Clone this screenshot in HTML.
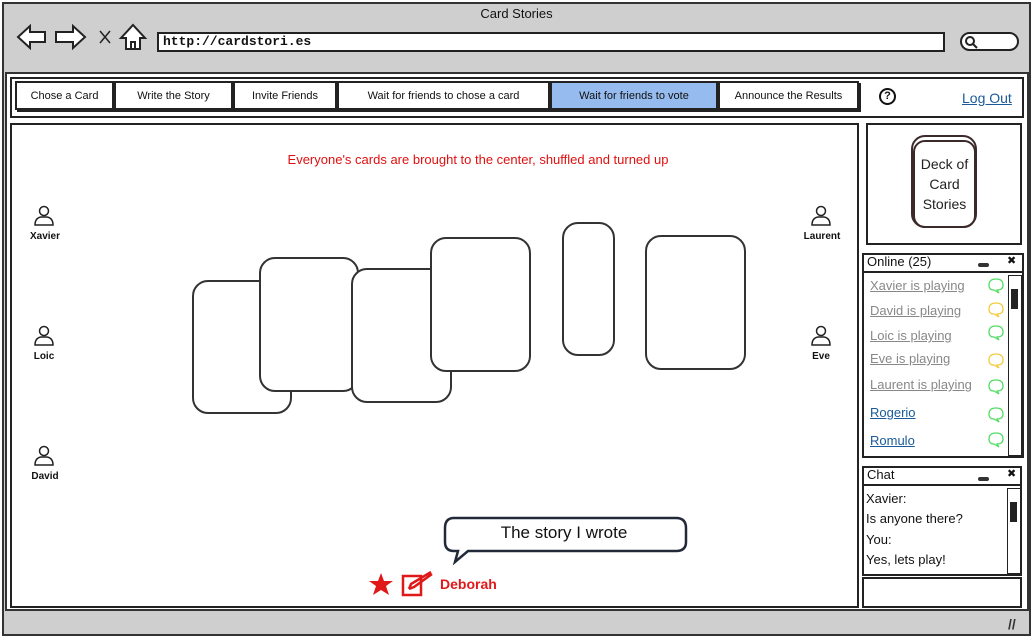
<!DOCTYPE html>
<html><head><meta charset="utf-8"><style>
*{margin:0;padding:0;box-sizing:border-box}
body{width:1033px;height:640px;position:relative;background:#fff;font-family:"Liberation Sans","DejaVu Sans",sans-serif;overflow:hidden;color:#111}
.a{position:absolute}
.box{position:absolute;border:2px solid #222;background:#fff}
.tab{position:absolute;top:81px;height:29px;border:2px solid #222;background:#fff;font-size:11px;text-align:center;line-height:27px;box-shadow:2px 2px 0 #222}
.card{position:absolute;border:2px solid #333;border-radius:16px;background:#fff}
.u{position:absolute;font-size:10px;font-weight:bold;text-align:center;width:50px}
.ol{position:absolute;left:870px;font-size:13px;color:#888;text-decoration:underline}
.bub{position:absolute;left:988px}
.ch{position:absolute;left:866px;font-size:13px}
</style></head><body>
<div class="a" style="left:2px;top:2px;width:1029px;height:634px;border:2px solid #333;background:#cfcfcf"></div>
<div class="a" style="left:0;top:6px;width:1033px;text-align:center;font-size:13px">Card Stories</div>
<svg class="a" style="left:14px;top:22px" width="140" height="32" viewBox="0 0 140 32" fill="none" stroke="#222" stroke-width="2">
<path d="M4 15 L16 4 L16 10 L31 10 L31 20 L16 20 L16 26 Z" fill="#fff"/>
<path d="M71 15 L59 4 L59 10 L42 10 L42 20 L59 20 L59 26 Z" fill="#fff"/>
<path d="M86 9 L96 21 M96 9 L86 21" stroke-width="1.5"/>
<path d="M107 16 L119 3 L131 16 L126 16 L126 27 L112 27 L112 16 Z" fill="#fff"/>
<path d="M117 27 L117 20 L121 20 L121 27"/>
</svg>
<div class="box" style="left:157px;top:32px;width:788px;height:20px;font-size:13px;line-height:16px;padding-left:4px;font-family:'Liberation Mono',monospace;font-weight:bold">http://cardstori.es</div>
<div class="a" style="left:960px;top:32px;width:59px;height:19px;border:2px solid #222;border-radius:10px;background:#fff"></div>
<svg class="a" style="left:964px;top:35px" width="14" height="14"><circle cx="6" cy="6" r="4" fill="none" stroke="#222" stroke-width="2"/><path d="M9 9 L13 13" stroke="#222" stroke-width="2"/></svg>
<div class="a" style="left:5px;top:72px;width:1024px;height:539px;background:#fff;border:2px solid #333"></div>
<div class="box" style="left:10px;top:77px;width:1014px;height:41px"></div>
<div class="tab" style="left:15px;width:99px">Chose a Card</div>
<div class="tab" style="left:114px;width:119px">Write the Story</div>
<div class="tab" style="left:233px;width:104px">Invite Friends</div>
<div class="tab" style="left:337px;width:213px">Wait for friends to chose a card</div>
<div class="tab" style="left:550px;width:168px;background:#96bbee">Wait for friends to vote</div>
<div class="tab" style="left:718px;width:141px">Announce the Results</div>
<div class="a" style="left:879px;top:88px;width:17px;height:17px;border:2px solid #111;border-radius:50%;font-size:11px;font-weight:bold;text-align:center;line-height:13px">?</div>
<div class="a" style="left:962px;top:90px;font-size:14px;color:#1a5a9a;text-decoration:underline">Log Out</div>
<div class="box" style="left:10px;top:123px;width:849px;height:485px"></div>
<div class="a" style="left:10px;top:152px;width:936px;text-align:center;font-size:13px;color:#e01010">Everyone's cards are brought to the center, shuffled and turned up</div>
<div class="card" style="left:192px;top:280px;width:100px;height:134px"></div>
<div class="card" style="left:259px;top:257px;width:100px;height:135px"></div>
<div class="card" style="left:351px;top:268px;width:101px;height:135px"></div>
<div class="card" style="left:430px;top:237px;width:101px;height:135px"></div>
<div class="card" style="left:562px;top:222px;width:53px;height:134px"></div>
<div class="card" style="left:645px;top:235px;width:101px;height:135px"></div>
<svg width="0" height="0"><defs><g id="p"><circle cx="11" cy="6" r="4.5" fill="#fff" stroke="#222" stroke-width="1.5"/><path d="M2 20 Q2 13 8 12 L14 12 Q20 13 20 20 Z" fill="#fff" stroke="#222" stroke-width="1.5"/></g></defs></svg>
<svg class="a" style="left:33px;top:205px" width="22" height="22"><use href="#p"/></svg><div class="u" style="left:20px;top:231px">Xavier</div>
<svg class="a" style="left:33px;top:325px" width="22" height="22"><use href="#p"/></svg><div class="u" style="left:19px;top:351px">Loic</div>
<svg class="a" style="left:33px;top:445px" width="22" height="22"><use href="#p"/></svg><div class="u" style="left:20px;top:471px">David</div>
<svg class="a" style="left:810px;top:205px" width="22" height="22"><use href="#p"/></svg><div class="u" style="left:797px;top:231px">Laurent</div>
<svg class="a" style="left:810px;top:325px" width="22" height="22"><use href="#p"/></svg><div class="u" style="left:796px;top:351px">Eve</div>
<svg class="a" style="left:440px;top:514px" width="252" height="52"><path d="M14 4 L236 4 Q246 4 246 14 L246 28 Q246 37 236 37 L28 37 L15 48 L18 37 L14 37 Q5 37 5 28 L5 14 Q5 4 14 4 Z" fill="#fff" stroke="#222a3a" stroke-width="2.5"/></svg>
<div class="a" style="left:444px;top:523px;width:240px;text-align:center;font-size:17px">The story I wrote</div>
<svg class="a" style="left:368px;top:571px" width="70" height="28"><path d="M13 2 L16 10 L25 10 L18 15 L21 24 L13 19 L5 24 L8 15 L1 10 L10 10 Z" fill="#e01818"/><rect x="35" y="5" width="18" height="19" fill="none" stroke="#e01818" stroke-width="2.5"/><path d="M41 18 L43 13 L63 1 M41 18 L46 16 L64 3" stroke="#e01818" stroke-width="2.5" fill="none"/></svg>
<div class="a" style="left:440px;top:576px;font-size:14px;font-weight:bold;color:#e01818">Deborah</div>
<div class="box" style="left:866px;top:123px;width:156px;height:122px"></div>
<div class="a" style="left:911px;top:135px;width:66px;height:93px;border:2px solid #3a2a2a;border-radius:14px"></div>
<div class="a" style="left:913px;top:140px;width:63px;height:88px;border:2px solid #3a2a2a;border-radius:12px;font-size:14px;text-align:center;line-height:20px;padding-top:12px;color:#222">Deck of<br>Card<br>Stories</div>
<div class="box" style="left:862px;top:253px;width:162px;height:205px"></div>
<div class="a" style="left:862px;top:253px;width:162px;height:20px;border-bottom:2px solid #222;font-size:13px;padding-left:5px;line-height:18px">Online (25)</div>
<div class="a" style="left:978px;top:263px;width:11px;height:4px;background:#333;border-radius:2px"></div>
<div class="a" style="left:1007px;top:254px;font-size:11px;font-weight:bold">✖</div>
<div class="a" style="left:1008px;top:275px;width:14px;height:181px;border:1.5px solid #222;background:#fff"></div>
<div class="a" style="left:1011px;top:289px;width:7px;height:20px;background:#222"></div>
<div class="ol" style="top:278px">Xavier is playing</div>
<div class="ol" style="top:303px">David is playing</div>
<div class="ol" style="top:328px">Loic is playing</div>
<div class="ol" style="top:351px">Eve is playing</div>
<div class="ol" style="top:377px">Laurent is playing</div>
<div class="ol" style="top:405px;color:#1a5a9a">Rogerio</div>
<div class="ol" style="top:433px;color:#1a5a9a">Romulo</div>
<svg width="0" height="0"><defs><path id="b" d="M8 1 Q15 1 15 7 Q15 12 9 12 L11 15 L6 12 Q1 12 1 7 Q1 1 8 1 Z" fill="none" stroke-width="1.3"/></defs></svg>
<svg class="bub" style="top:278px" width="17" height="17"><use href="#b" stroke="#55dd66"/></svg>
<svg class="bub" style="top:302px" width="17" height="17"><use href="#b" stroke="#f2cc40"/></svg>
<svg class="bub" style="top:325px" width="17" height="17"><use href="#b" stroke="#55dd66"/></svg>
<svg class="bub" style="top:353px" width="17" height="17"><use href="#b" stroke="#f2cc40"/></svg>
<svg class="bub" style="top:379px" width="17" height="17"><use href="#b" stroke="#55dd66"/></svg>
<svg class="bub" style="top:407px" width="17" height="17"><use href="#b" stroke="#55dd66"/></svg>
<svg class="bub" style="top:432px" width="17" height="17"><use href="#b" stroke="#55dd66"/></svg>
<div class="box" style="left:862px;top:466px;width:160px;height:110px"></div>
<div class="a" style="left:862px;top:466px;width:160px;height:20px;border-bottom:2px solid #222;font-size:13px;padding-left:5px;line-height:18px">Chat</div>
<div class="a" style="left:978px;top:477px;width:11px;height:4px;background:#333;border-radius:2px"></div>
<div class="a" style="left:1007px;top:467px;font-size:11px;font-weight:bold">✖</div>
<div class="a" style="left:1007px;top:488px;width:14px;height:86px;border:1.5px solid #222;background:#fff"></div>
<div class="a" style="left:1010px;top:502px;width:7px;height:20px;background:#222"></div>
<div class="ch" style="top:491px">Xavier:</div>
<div class="ch" style="top:511px">Is anyone there?</div>
<div class="ch" style="top:532px">You:</div>
<div class="ch" style="top:552px">Yes, lets play!</div>
<div class="box" style="left:862px;top:577px;width:160px;height:31px"></div>
<div class="a" style="left:1008px;top:616px;font-size:14px;color:#333;font-weight:bold">//</div>
</body></html>
